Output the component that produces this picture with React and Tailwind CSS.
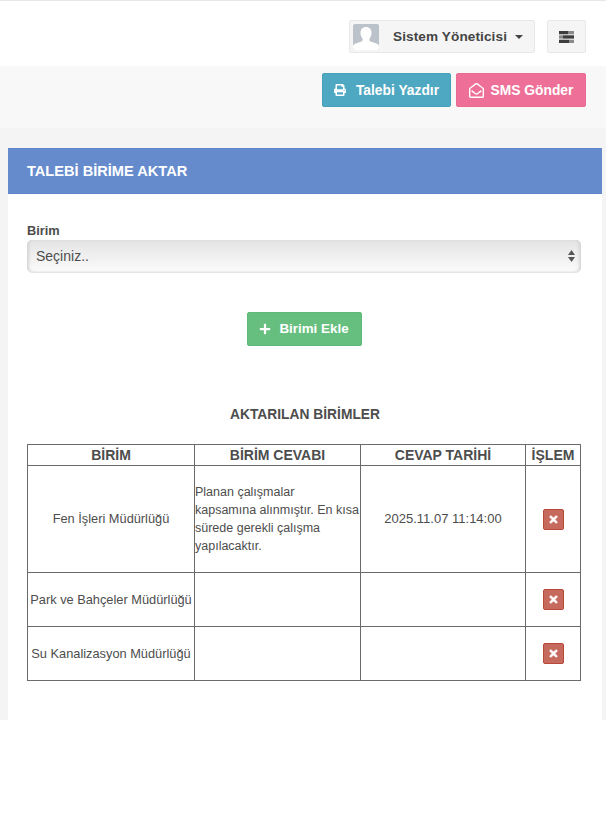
import { FaPrint, FaRegEnvelopeOpen, FaPlus, FaTimes } from "react-icons/fa";

const rows = [
  {
    birim: "Fen İşleri Müdürlüğü",
    cevap: ["Planan çalışmalar", "kapsamına alınmıştır. En kısa", "sürede gerekli çalışma", "yapılacaktır."],
    tarih: "2025.11.07 11:14:00",
    height: "h-[107px]",
  },
  { birim: "Park ve Bahçeler Müdürlüğü", cevap: [], tarih: "", height: "h-[54px]" },
  { birim: "Su Kanalizasyon Müdürlüğü", cevap: [], tarih: "", height: "h-[54px]" },
];

const Avatar = () => (
  <svg width="26" height="26" viewBox="0 0 26 26" className="rounded-[2px]">
    <rect width="26" height="26" fill="#bcc2c9" />
    <path d="M0 26v-3.5c0-1.6 1-2.6 2.6-3.1l5.9-2c.8-.3 1.1-.9 1.1-1.7v-1.1c-1.300-1.300-2.100-3.200-2.100-5.600 0-3.600 2-5.900 5.500-5.900s5.500 2.300 5.500 5.900c0 2.400-.8 4.300-2.100 5.600v1.100c0 .8.300 1.400 1.100 1.700l5.900 2c1.600.5 2.600 1.500 2.600 3.100V26z" fill="#fff" />
  </svg>
);

const TasksIcon = () => (
  <svg width="15" height="12" viewBox="0 0 15 12" fill="#3d3d3d">
    <rect x="0" y="0" width="9" height="3.300" />
    <rect x="9" y="0" width="6" height="3.300" fill="#8a8a8a" />
    <rect x="0" y="4.300" width="4" height="3.300" fill="#8a8a8a" />
    <rect x="4" y="4.300" width="11" height="3.300" />
    <rect x="0" y="8.700" width="10" height="3.300" />
    <rect x="10" y="8.700" width="5" height="3.300" fill="#8a8a8a" />
  </svg>
);

const SelectArrows = () => (
  <svg width="7" height="12" viewBox="0 0 7 12" fill="#555" className="absolute right-[6px] top-[10px] pointer-events-none">
    <path d="M3.500 0l3.500 5H0z" />
    <path d="M3.500 12L0 7h7z" />
  </svg>
);

export default function App() {
  return (
    <div className="min-h-[840px] bg-white text-[#4d4d4d] font-['Liberation_Sans',Arial,sans-serif] text-[13px]">
      <header className="h-[66px] border-t border-[#e6e6e6] bg-white flex justify-end items-start pt-[19px] pr-5">
        <button className="w-[186px] h-[33px] flex items-center pl-[3px] bg-[#f5f5f5] border border-[#e8e8e8] rounded-[2px]">
          <Avatar />
          <span className="ml-[14px] pt-px font-bold text-[13.600px] text-[#444] tracking-[0.1px]">Sistem Yöneticisi</span>
          <span className="ml-2 border-x-[4px] border-t-[4px] border-x-transparent border-t-[#444]" />
        </button>
        <button className="ml-3 w-[39px] h-[33px] flex items-center justify-center bg-[#f5f5f5] border border-[#e8e8e8] rounded-[2px]">
          <TasksIcon />
        </button>
      </header>

      <div className="h-[62px] bg-[#f8f8f8] flex justify-end items-start pt-[7px] pr-5 gap-[5px]">
        <button className="w-[129px] h-[34px] flex items-center justify-center gap-[10px] bg-[#4fa8c1] border border-[#46a0b9] rounded-[2px] text-white font-bold text-[13.800px]">
          <FaPrint size={12} />
          <span className="pt-[2px]">Talebi Yazdır</span>
        </button>
        <button className="w-[130px] h-[34px] flex items-center justify-center gap-[7px] bg-[#ee7098] border border-[#ea6a92] rounded-[2px] text-white font-bold text-[13.800px]">
          <FaRegEnvelopeOpen size={15} />
          <span className="pt-[2px]">SMS Gönder</span>
        </button>
      </div>

      <main className="h-[592px] bg-[#f4f4f4] pt-5 pl-2 pr-1">
        <section className="h-[572px] bg-white">
          <div className="h-[46px] flex items-center pl-[19px] pt-px bg-[#658bcd] border-y border-[#5f86ca] text-white font-bold text-[14.600px]">
            TALEBİ BİRİME AKTAR
          </div>

          <div className="px-[19px] pt-[29px]">
            <label className="block font-bold text-[12.800px] leading-[15px] text-[#4d4d4d] mb-[2px]">Birim</label>
            <div className="relative w-[554px]">
              <select
                defaultValue=""
                className="appearance-none block w-full h-[33px] pl-[9px] rounded-[5px] border-b border-[#e4e4e4] bg-gradient-to-b from-[#e4e4e4] to-[#fbfbfb] shadow-[inset_3px_0_3px_-1px_#d4d4d4,inset_-3px_0_3px_-1px_#d4d4d4] text-[14px] text-[#4d4d4d] outline-none"
              >
                <option value="">Seçiniz..</option>
              </select>
              <SelectArrows />
            </div>

            <div className="flex justify-center mt-[39px] pr-[2px]">
              <button className="w-[115px] h-[34px] flex items-center justify-center gap-[8px] bg-[#66bf7f] border border-[#5fb978] rounded-[2px] text-white font-bold text-[13.400px]">
                <FaPlus size={12} />
                Birimi Ekle
              </button>
            </div>

            <h3 className="mt-[61px] text-center font-bold text-[13.800px] leading-[16px] text-[#4d4d4d]">AKTARILAN BİRİMLER</h3>

            <table className="mt-[21px] w-[553px] table-fixed border-collapse border border-[#555]">
              <colgroup>
                <col className="w-[167px]" />
                <col className="w-[166px]" />
                <col className="w-[165px]" />
                <col className="w-[55px]" />
              </colgroup>
              <thead>
                <tr className="h-[21px] text-[14px] leading-[19px] font-bold">
                  <th className="border border-[#6a6a6a]">BİRİM</th>
                  <th className="border border-[#6a6a6a]">BİRİM CEVABI</th>
                  <th className="border border-[#6a6a6a]">CEVAP TARİHİ</th>
                  <th className="border border-[#6a6a6a] border-l-[#bbb] whitespace-nowrap">İŞLEM</th>
                </tr>
              </thead>
              <tbody>
                {rows.map((row) => (
                  <tr key={row.birim} className={row.height}>
                    <td className="border border-[#6a6a6a] text-center text-[12.800px] whitespace-nowrap">{row.birim}</td>
                    <td className="border border-[#6a6a6a] text-[12.500px] leading-[18px] whitespace-nowrap">
                      {row.cevap.map((line) => (
                        <div key={line}>{line}</div>
                      ))}
                    </td>
                    <td className="border border-[#6a6a6a] text-center">{row.tarih}</td>
                    <td className="border border-[#6a6a6a] border-l-[#c4c4c4]">
                      <button className="mx-auto flex items-center justify-center w-[21px] h-[21px] bg-[#c76a5e] border border-[#b9473a] rounded-[2px] text-white">
                        <FaTimes size={11} className="stroke-[30]" />
                      </button>
                    </td>
                  </tr>
                ))}
              </tbody>
            </table>
          </div>
        </section>
      </main>
    </div>
  );
}
